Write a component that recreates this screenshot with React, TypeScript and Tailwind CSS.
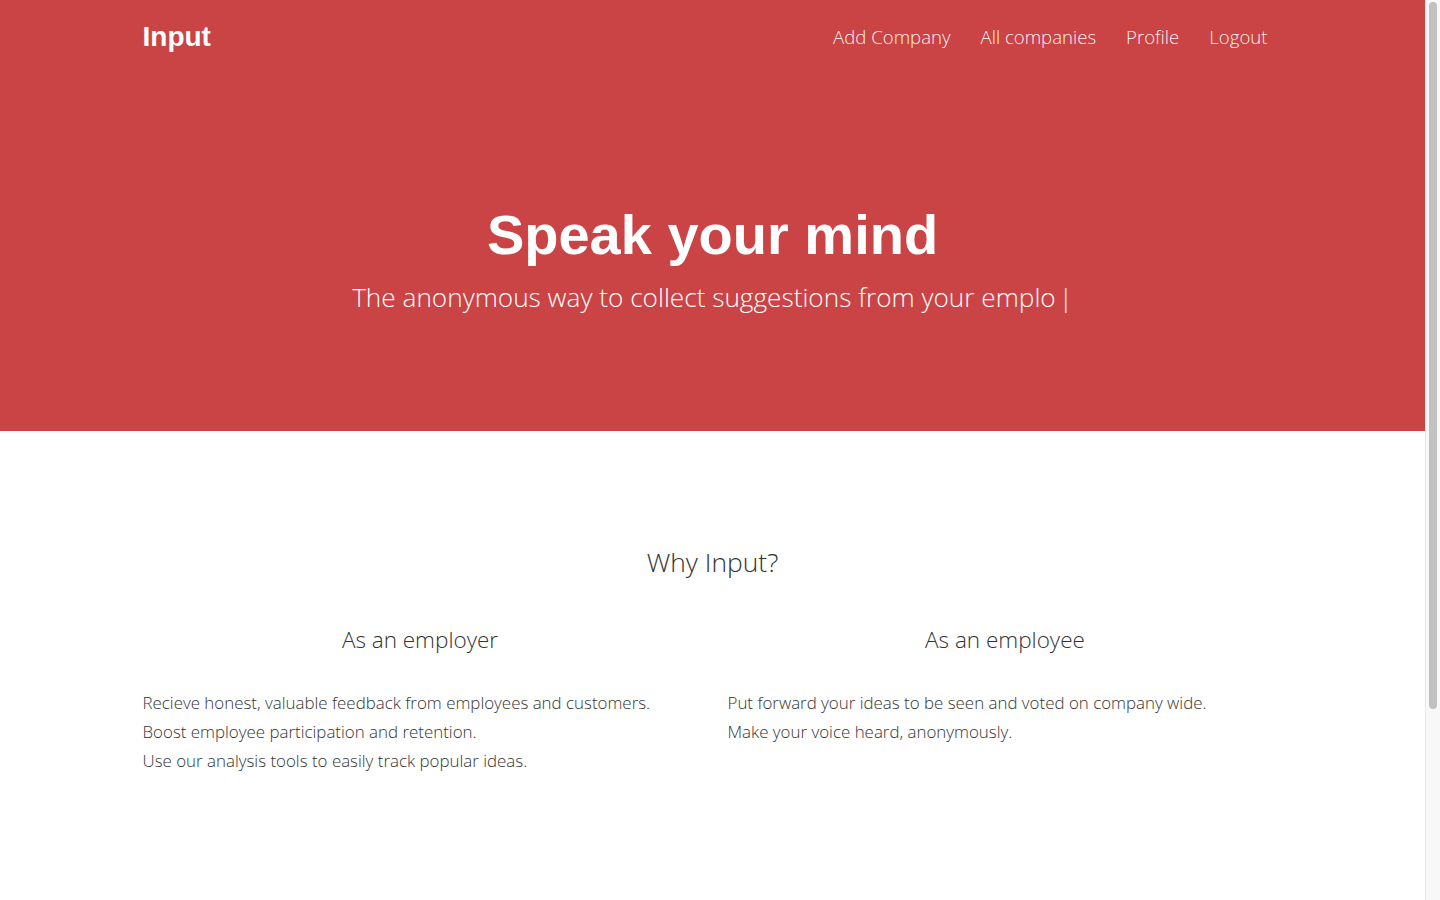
import React from "react";

export default function App() {
  const sans = { fontFamily: '"Open Sans", "Noto Sans", sans-serif' };
  const arial = { fontFamily: '"Liberation Sans", Arial, sans-serif' };
  return (
    <div className="flex h-[900px] overflow-hidden bg-white" style={sans}>
      <main className="w-[1425px] shrink-0">
        <header className="h-[431px] bg-[#ca4446] text-white">
          <div className="mx-auto w-[1170px] px-[15px]">
            <nav className="flex h-[74px] items-center justify-between">
              <div className="text-[28px] font-bold leading-none" style={arial}>
                Input
              </div>
              <ul className="flex items-center text-[18.6px] font-light text-white/95">
                <li className="px-[15px]">Add Company</li>
                <li className="px-[15px]">All companies</li>
                <li className="px-[15px]">Profile</li>
                <li className="px-[15px]">Logout</li>
              </ul>
            </nav>
            <div className="pt-[130px] text-center">
              <h1 className="text-[56px] font-bold leading-[62px]" style={arial}>
                Speak your mind
              </h1>
              <p className="mt-[13px] text-[26.2px] font-light leading-[36px]">
                The anonymous way to collect suggestions from your emplo
                <span className="ml-[3px] text-white/90">|</span>
              </p>
            </div>
          </div>
        </header>
        <section className="mx-auto w-[1170px] pt-[113px] text-[#333]">
          <h2 className="text-center text-[26.4px] font-light leading-[36px]">Why Input?</h2>
          <div className="mt-[44px] grid grid-cols-2">
            <div className="px-[15px]">
              <h3 className="text-center text-[22.5px] font-light leading-[32px]">As an employer</h3>
              <div className="mt-[32px] text-[16.9px] font-light leading-[29px]">
                <p>Recieve honest, valuable feedback from employees and customers.</p>
                <p>Boost employee participation and retention.</p>
                <p>Use our analysis tools to easily track popular ideas.</p>
              </div>
            </div>
            <div className="px-[15px]">
              <h3 className="text-center text-[22.5px] font-light leading-[32px]">As an employee</h3>
              <div className="mt-[32px] text-[16.9px] font-light leading-[29px]">
                <p>Put forward your ideas to be seen and voted on company wide.</p>
                <p>Make your voice heard, anonymously.</p>
              </div>
            </div>
          </div>
        </section>
      </main>
      <aside className="flex h-[900px] w-[15px] shrink-0 justify-center border-l border-[#e8e8e8] bg-[#f8f8f8] pt-[2px]">
        <div className="h-[707px] w-[8px] rounded-full bg-[#c1c1c1]" />
      </aside>
    </div>
  );
}
